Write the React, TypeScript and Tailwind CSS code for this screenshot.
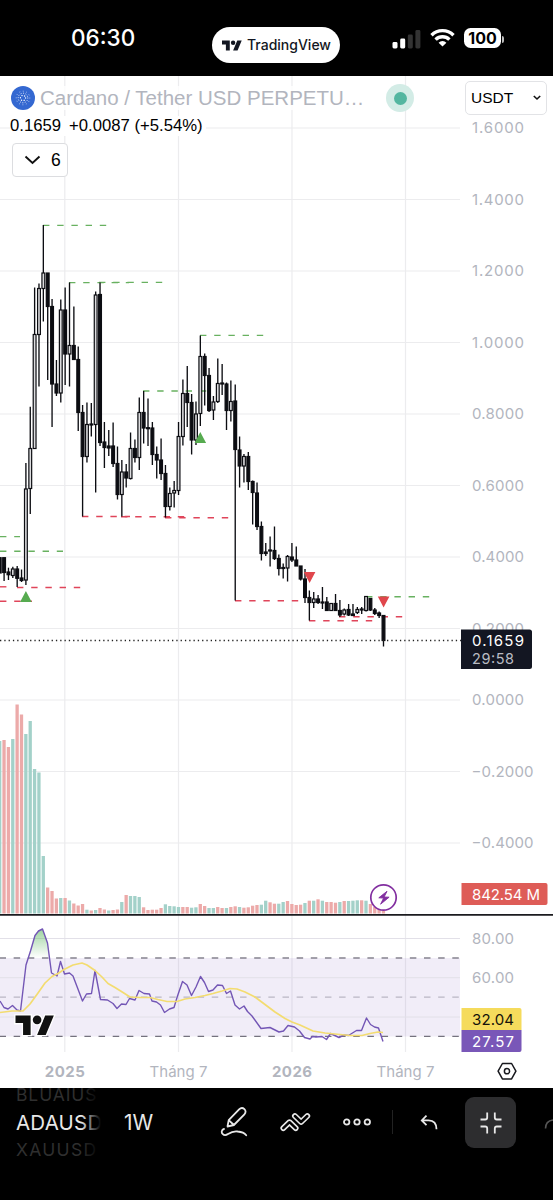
import React from 'react';

const STEP = 4.361;
const FIRST = -6;
const xAt = (i: number) => 25.9 + STEP * i;

// body top, body bottom, high, low, direction (1 = up, 0 = down)
type Candle = [number, number, number, number, 0 | 1];

const CANDLES: Candle[] = [
  [557.7, 573, 557.7, 573, 0], [557.7, 572.5, 557.7, 581, 0], [572, 574.7, 567.7, 580, 0],
  [569, 575.5, 566.7, 578, 1], [569, 578.3, 566, 587, 0], [578, 580.5, 569.5, 582, 0],
  [489, 580, 463, 585, 1], [448.5, 488.5, 406.7, 514, 1], [334.5, 448.5, 287.5, 449, 1],
  [288.5, 334.5, 283.5, 386.5, 1], [273, 288.5, 225, 321.5, 1], [273, 306.5, 273, 380, 0],
  [306.5, 384, 299, 427, 0], [384, 393, 360, 396, 0], [310, 393, 299.5, 402.5, 1],
  [310, 354, 287.5, 385, 0], [345.5, 354, 282.5, 386.5, 1], [345.5, 359.5, 306.5, 360, 0],
  [359.5, 412.5, 346.5, 431, 0], [412.5, 456.5, 405, 516.5, 0], [424.5, 456.5, 402.5, 462.5, 1],
  [424, 425, 403, 436.5, 1], [295, 424.5, 291.5, 492.5, 1], [294.5, 442.5, 282.5, 446, 0],
  [442, 447.5, 422, 468, 0], [446, 448, 430, 456, 0], [446, 463.5, 422.5, 467, 0],
  [463.5, 494.5, 446.5, 499.5, 0], [472, 494.5, 460, 516.5, 1], [472, 478, 464, 487.5, 0],
  [448.5, 478.5, 432.5, 479.5, 1], [448.5, 457.5, 439.5, 462.5, 0], [412.5, 457.5, 397.5, 470, 1],
  [412.5, 428, 391, 443.5, 0], [427.7, 428.7, 398.5, 446, 0], [428, 454.5, 422, 465, 0],
  [454.5, 460, 446.5, 478.5, 0], [460, 473.5, 438.5, 480, 0], [473.5, 506.5, 465, 517.5, 0],
  [493.5, 506.5, 487.5, 510.5, 1], [490.5, 493, 481, 507.5, 1], [436.5, 490.5, 422, 495, 1],
  [393.5, 436.5, 379.5, 445.5, 1], [393.5, 402.5, 366, 427, 0], [402.5, 440, 394, 454.5, 0],
  [414, 440, 401.5, 445, 1], [356.5, 413.5, 335.5, 426, 1], [356.5, 375.5, 353.5, 405.5, 0],
  [375.5, 410.5, 368, 412, 0], [402, 410, 396, 420, 1], [383.5, 401.5, 358.5, 403, 1],
  [383, 384, 364, 395, 0], [384, 410.5, 382.5, 430, 0], [401.5, 410.5, 380.5, 421.5, 1],
  [401, 449.5, 384.5, 600.5, 0], [450, 466, 436.5, 487.5, 0], [456.5, 466, 454, 482.5, 1],
  [456.5, 481.5, 452, 490, 0], [481.5, 492.5, 480.5, 524.5, 0], [493, 526.5, 482.5, 530, 0],
  [526.5, 553.5, 521.5, 560.5, 0], [552, 553.5, 543, 556, 0], [550, 551, 536.5, 566.5, 0],
  [550.5, 558.5, 526.5, 560, 0], [558.5, 568.5, 554.5, 575.5, 0], [567.5, 568.5, 563.5, 578.5, 0],
  [556.5, 568, 555, 581.5, 1], [557, 560, 543, 562, 0], [560, 566, 546.5, 566, 0],
  [566, 579, 566, 580.5, 0], [579, 597.5, 569, 603, 0], [597.5, 602.5, 590.5, 620.5, 0],
  [599, 602.5, 592, 608, 1], [599, 602.5, 595, 604, 0], [602, 603, 587, 609, 0],
  [602, 610.5, 597, 611, 0], [603.5, 610.5, 603, 611, 1], [603.5, 610.5, 594, 611, 0],
  [610.5, 615, 600, 617, 0], [610, 614, 608.5, 615.5, 1], [609.5, 615, 604, 616, 0],
  [614, 615.5, 604, 616, 0], [609.5, 612.5, 607, 614, 1], [609, 610, 607, 614, 0],
  [596.5, 610.5, 596, 611.5, 1], [598.5, 610, 598, 611, 0], [610, 613.5, 608, 615, 0],
  [613, 615.5, 611.5, 618, 0], [615.5, 640.5, 615, 646.5, 0],
];

// top edge of each volume bar, paired with the colour string below
const VOLUME_TOPS = [
  741, 740, 747, 739, 704.5, 714.5, 734, 721, 769, 772.5, 856, 887.5, 891, 898.5, 898, 898, 900.5,
  903.5, 905.5, 904, 909.7, 910.5, 910, 908, 909.5, 910.5, 910, 909.5, 902, 895, 896, 896, 897, 907.3,
  910, 909.7, 909.7, 908, 904.3, 906, 906.3, 907, 907, 907, 907.7, 907.3, 904, 906, 908, 908, 907,
  908, 908, 907, 906.3, 907, 907.7, 907.3, 905.7, 905, 904.7, 900.7, 902.3, 903.7, 903.7, 902, 901,
  904, 905, 904.7, 903, 900.7, 900.7, 899.3, 900.7, 902, 902, 902.7, 902, 901, 901, 900.7, 900.3,
  900.3, 900.7, 904, 907, 909, 911,
];
const VOLUME_COLORS =
  'grrgrrggggg' + 'rrrgrgrrrgrgrrgrr' + 'grggg' + 'rrrrrggggrrggrrggrrgrrgrrrrggrrggrrrrgrgrgrrrgrgggrgrrrr';

const RSI =
  '0,1001 4,1007.5 8,1009 12.5,1005.5 17,1010 20.5,1011 23,990 26,965 30.5,951 35,935.5 38.5,931 42.5,929 47.5,943 51.5,973 57,976 60.5,961.5 64.5,974 69.5,973 73,976 82.5,1001 86.5,994 91.5,993.5 95,970.5 100.5,999.5 107.5,1000 113,1003.5 117,1008.5 121.5,1004 126,1004.5 129.5,998.5 135,1000 139,990.5 144,993.5 149.5,994 152,1001 156.5,1002 160.5,1005 164.5,1012.5 169.5,1009 174,1007.5 177.5,996 182.5,981.5 187,985 191.5,995.5 196,987 200.5,976.5 204.5,982.5 208.5,991.5 213,990 217.5,985 222.5,985.5 226.5,993.5 230.5,991 235,1005 239.5,1009 244,1006 247.5,1011.5 252,1016 261,1028.5 270,1027.5 279,1032 283.5,1031 288,1025.5 294.5,1027 299.5,1031 304.5,1037.5 310,1039 312.5,1036.5 316,1037 322,1036.5 326.5,1039.5 330.5,1033.5 339,1037.5 344,1035 348.5,1035.5 356.5,1030.5 361.5,1030.5 366.5,1018 370.5,1024.5 374.5,1027 378.5,1028 383,1041.5';

const RSI_MA =
  '0,1012.5 12,1011 23,1011 30,1004 38,993 45,983 52,976.5 58,973.5 64,969.5 73,965 82,963 87,965 95,970.5 102,977 108,983.5 115,987.5 123,992.5 130,997 140,997.5 150,997.5 158,999.5 167,1001.5 177,1001.5 185,999 195,997.5 205,995.5 213,993.5 222,991 230,988.5 237,989 245,992 255,997 265,1004.5 275,1012 285,1018.5 292,1022 300,1025 313,1031 325,1033 340,1034.5 350,1035.5 362,1035.5 370,1033.5 378,1032 383,1032.5';

const PRICES: [string, number][] = [
  ['1.6000', 128], ['1.4000', 199.5], ['1.2000', 271], ['1.0000', 342.5], ['0.8000', 414],
  ['0.6000', 485.5], ['0.4000', 557], ['0.2000', 628.5], ['0.0000', 700], ['−0.2000', 771.5],
  ['−0.4000', 843],
];

const DATES: [string, number, boolean][] = [
  ['2025', 64.8, true], ['Tháng 7', 178.5, false], ['2026', 292, true], ['Tháng 7', 405.5, false],
];

// x1, x2, y
const GREEN_LEVELS = [
  [43, 107, 225.4], [69, 129, 282.6], [99, 164, 282.4], [143, 208, 391], [200, 264, 335.4],
  [0, 20, 536.6], [0, 63, 551.3], [366, 430, 596.7],
];
const RED_LEVELS = [
  [82, 130, 516.5], [121, 186, 516.8], [165, 230, 517.7], [0, 11, 586.8], [17, 82, 587.5],
  [0, 32, 601.3], [235, 299, 600.8], [309, 374, 620.7], [339, 404, 616.8],
];

const TvLogo = ({ className }: { className?: string }) => (
  <svg viewBox="0 4 36 18" className={className} fill="currentColor">
    <path d="M14 22H7V11H0V4h14v18zM28 22h-8l7.5-18h8L28 22z" />
    <circle cx="20" cy="8" r="4" />
  </svg>
);

const StatusBar = () => (
  <header className="flex h-[76px] shrink-0 items-start bg-black text-white">
    <div className="ml-[71px] mt-[23px] w-[141px] text-[22.5px] font-medium leading-[30px]">06:30</div>
    <div className="mt-[27px] flex h-9 w-[128px] items-center gap-[5px] rounded-full bg-white pl-[10px] text-[#131722]">
      <TvLogo className="h-[11px] w-[20px]" />
      <span className="whitespace-nowrap text-[14px] font-medium leading-5">TradingView</span>
    </div>
    <div className="ml-[52px] mt-[28px] flex h-[22px] items-center">
      <svg viewBox="0 0 29 20" className="mr-[9px] h-5 w-[29px]">
        <rect x="0.5" y="13" width="5" height="6.5" rx="1.4" fill="#fff" />
        <rect x="8.2" y="9.5" width="5" height="10" rx="1.4" fill="#fff" />
        <rect x="15.8" y="5.5" width="5" height="14" rx="1.4" fill="#333" />
        <rect x="23.4" y="1" width="5" height="18.5" rx="1.4" fill="#333" />
      </svg>
      <svg viewBox="0 0 25 19" className="-mt-1 mr-[9px] h-[19px] w-[25px]" fill="none" stroke="#fff" strokeWidth="3.4">
        <path d="M1.5 7.2a15.6 15.6 0 0 1 22 0" />
        <path d="M5.6 11.6a9.8 9.8 0 0 1 13.8 0" />
        <path d="M12.5 18.6l-3.9-3.9a5.5 5.5 0 0 1 7.8 0z" fill="#fff" stroke="none" />
      </svg>
      <div className="-mt-0.5 flex h-[20px] w-[37px] items-center justify-center rounded-[6.5px] bg-white text-[16px] font-bold leading-none text-black">
        100
      </div>
      <div className="ml-[1px] h-[7px] w-[2px] rounded-r-full bg-[#bbb]" />
    </div>
  </header>
);

const Chart = () => (
  <svg viewBox="0 76 553 1012" className="block h-[1012px] w-[553px]">
    <defs>
      <linearGradient id="overbought" x1="0" y1="0" x2="0" y2="1">
        <stop offset="0" stopColor="#4caf50" stopOpacity="0.55" />
        <stop offset="1" stopColor="#4caf50" stopOpacity="0" />
      </linearGradient>
    </defs>

    {/* Grid */}
    <g stroke="#ececee" strokeWidth="1.2">
      {PRICES.map(([label, y]) => (
        <line key={label} x1="0" x2="460" y1={y} y2={y} />
      ))}
      {DATES.map(([, x]) => (
        <line key={x} x1={x} x2={x} y1="76" y2="1052" />
      ))}
    </g>

    {/* Volume */}
    {VOLUME_TOPS.map((top, n) => (
      <rect
        key={n}
        x={xAt(n + FIRST) - 1.7}
        y={top}
        width="3.3"
        height={913.5 - top}
        fill={VOLUME_COLORS[n] === 'g' ? '#a3d1c9' : '#ecaaa9'}
      />
    ))}

    {/* Levels */}
    <g stroke="#68b160" strokeWidth="1.4" strokeDasharray="6.4 7.8">
      {GREEN_LEVELS.map(([x1, x2, y]) => (
        <line key={`${x1}-${y}`} x1={x1} x2={x2} y1={y} y2={y} />
      ))}
    </g>
    <g stroke="#e0455a" strokeWidth="1.4" strokeDasharray="6.4 7.8">
      {RED_LEVELS.map(([x1, x2, y]) => (
        <line key={`${x1}-${y}`} x1={x1} x2={x2} y1={y} y2={y} />
      ))}
    </g>

    {/* Candles */}
    {CANDLES.map(([top, bottom, high, low, up], n) => {
      const x = xAt(n + FIRST);
      return (
        <g key={n} stroke="#0c0d12">
          <line x1={x} x2={x} y1={high} y2={low} strokeWidth="1.35" />
          <rect
            x={x - 1.4}
            y={top}
            width="2.8"
            height={bottom - top}
            strokeWidth="1.2"
            fill={up ? '#dcdcde' : '#0c0d12'}
          />
        </g>
      );
    })}

    {/* Signals */}
    <path d="M25.9 591l5.8 11H20.1zM200.3 432l5.8 11h-11.6z" fill="#56ab50" />
    <path d="M309.6 583l-5.8-11h11.6zM383.6 607.5l-5.8-11h11.6z" fill="#e0464c" />

    {/* Last price */}
    <line x1="0" x2="461" y1="640.5" y2="640.5" stroke="#222" strokeWidth="1.3" strokeDasharray="1.3 3" />

    {/* Event marker */}
    <circle cx="383.5" cy="897.5" r="12.7" fill="#fff" stroke="#822fa0" strokeWidth="1.7" />
    <path d="M387 891.3l-8.2 6.5 4.8.3-3 6.1 8.5-7-5-.2z" fill="#822fa0" stroke="#822fa0" strokeWidth="0.9" strokeLinejoin="round" />

    {/* RSI pane */}
    <rect x="0" y="958" width="460" height="78.5" fill="#7e57c2" fillOpacity="0.11" />
    <g stroke="#e2e0e8" strokeWidth="1">
      <line x1="0" x2="460" y1="938.5" y2="938.5" />
      <line x1="0" x2="460" y1="977.7" y2="977.7" />
      <line x1="0" x2="460" y1="1017" y2="1017" />
    </g>
    <g strokeWidth="1.3" strokeDasharray="6.5 7.65" strokeDashoffset="0.5">
      <line x1="0" x2="459" y1="958" y2="958" stroke="#85838e" />
      <line x1="0" x2="459" y1="997.2" y2="997.2" stroke="#bab7c3" />
      <line x1="0" x2="459" y1="1036.3" y2="1036.3" stroke="#74727e" />
    </g>
    <path d="M28.5 958L30.5 951 35 935.5 38.5 931 42.5 929 47.5 943 49.5 958z" fill="url(#overbought)" />
    <polyline points={RSI} fill="none" stroke="#7356b5" strokeWidth="1.4" strokeLinejoin="round" />
    <polyline points={RSI_MA} fill="none" stroke="#f3dc70" strokeWidth="1.7" strokeLinejoin="round" />
    <line x1="0" x2="553" y1="914.8" y2="914.8" stroke="#1b1b1f" strokeWidth="1.7" />

    {/* Price axis */}
    <g fontSize="15" fill="#b2b5be">
      {PRICES.map(([label, y]) => (
        <text key={label} x={label.length > 6 ? 471.5 : 472} y={y + 5} textLength={label.length > 6 ? 62 : 52}>
          {label}
        </text>
      ))}
      <text x="472" y="943.7" textLength="42">80.00</text>
      <text x="472" y="983" textLength="42">60.00</text>
    </g>
    <path d="M461 629.5h68.5q2.5 0 2.5 2.5v34.5q0 2.5-2.5 2.500H461z" fill="#131622" />
    <text x="472" y="646.2" fontSize="15" textLength="52" fill="#fff">0.1659</text>
    <text x="472" y="664" fontSize="14.5" textLength="42" fill="#b9bbc3">29:58</text>
    <path d="M461.5 883h84q2 0 2 2v18q0 2-2 2h-84z" fill="#de5c57" />
    <text x="472" y="899.5" fontSize="15" textLength="68" fill="#fff">842.54 M</text>
    <path d="M461.5 1008h58q2 0 2 2v20h-60z" fill="#f5db5c" />
    <path d="M461.5 1030h60v20q0 2-2 2h-58z" fill="#7957b8" />
    <text x="472" y="1025" fontSize="15" textLength="42" fill="#16130a">32.04</text>
    <text x="472" y="1047" fontSize="15" textLength="42" fill="#fff">27.57</text>

    {/* Time axis */}
    {DATES.map(([label, x, bold]) => (
      <text
        key={x}
        x={x}
        y="1077"
        fontSize="15"
        fontWeight={bold ? 700 : 400}
        textAnchor="middle"
        textLength={bold ? 40 : 58}
        fill="#b2b5be"
      >
        {label}
      </text>
    ))}
    <g fill="none" stroke="#17181d" strokeWidth="1.5" strokeLinejoin="round">
      <path d="M502.4 1063.5h9.2l4.3 7.7-4.3 7.7h-9.2l-4.3-7.7z" />
      <circle cx="507" cy="1071.2" r="2.6" />
    </g>

    {/* Watermark */}
    <g
      transform="translate(15.5 1011.2) scale(1.08)"
      fill="#111"
      stroke="#fff"
      strokeWidth="2.5"
      paintOrder="stroke"
    >
      <path d="M14 22H7V11H0V4h14v18zM28 22h-8l7.5-18h8L28 22z" />
      <circle cx="20" cy="8" r="4" />
    </g>
  </svg>
);

const CardanoIcon = () => (
  <svg viewBox="0 0 24 24" className="h-6 w-6">
    <circle cx="12" cy="12" r="12" fill="#3468d1" />
    <g fill="none" stroke="#fff" strokeLinecap="round">
      <circle cx="12" cy="12" r="2.6" strokeWidth="1.3" strokeDasharray="0.1 2.62" />
      <circle cx="12" cy="12" r="4.8" strokeWidth="1" strokeDasharray="0.1 2.4" />
      <circle cx="12" cy="12" r="6.8" strokeWidth="0.9" strokeDasharray="0.1 3.46" opacity="0.7" />
    </g>
  </svg>
);

const Legend = () => (
  <div className="absolute inset-x-0 top-0 pl-[10px] pt-[8px] font-['Liberation_Sans',Arial,sans-serif] text-black">
    <div className="flex h-7 items-center">
      <div className="ml-px"><CardanoIcon /></div>
      <span className="ml-[5px] w-[326px] whitespace-nowrap bg-white/80 text-[20.5px] leading-6 text-[#b2b5be]">
        Cardano / Tether USD PERPETU…
      </span>
      <span className="ml-[20px] flex h-7 w-7 items-center justify-center rounded-full bg-[#d3ece6]">
        <span className="h-[13px] w-[13px] rounded-full bg-[#53b6a0]" />
      </span>
    </div>
    <div className="mt-[4px] flex w-[196px] gap-[8px] whitespace-nowrap bg-white text-[16.7px] leading-5">
      <span>0.1659</span>
      <span>+0.0087 (+5.54%)</span>
    </div>
    <button className="ml-[2px] mt-[7px] flex h-[34px] w-[56px] items-center gap-[10px] rounded-[4px] border border-[#dcdde0] bg-white pl-[11px] text-[17.5px]">
      <svg viewBox="0 0 17 10" className="h-[10px] w-[17px]" fill="none" stroke="#111" strokeWidth="1.9">
        <path d="M1.5 1.5l7 6.5 7-6.5" />
      </svg>
      6
    </button>
    <button className="absolute left-[465px] top-[5px] flex h-[34px] w-[82px] items-center justify-between rounded-[5px] border border-[#e2e3e6] bg-white pl-[5px] pr-[5px] text-[15.5px]">
      USDT
      <svg viewBox="0 0 8 6" className="h-[6px] w-[8px]" fill="none" stroke="#111" strokeWidth="1.6">
        <path d="M0.8 1l3.200 3 3.200-3" />
      </svg>
    </button>
  </div>
);

const Toolbar = () => (
  <footer className="flex h-[112px] shrink-0 items-start overflow-hidden bg-black text-[#e8e8e8]">
    {/* Symbol wheel */}
    <div className="relative ml-4 h-[80px] w-[85px] overflow-hidden whitespace-nowrap">
      <div className="-mt-[6px] h-[25px] text-[17.5px] leading-[25px] tracking-[0.9px] text-[#2f2f2f]">BLUAIUS</div>
      <div className="h-[32px] text-[20.5px] leading-[32px] tracking-[0.2px]">ADAUSD</div>
      <div className="h-[22px] text-[17.5px] leading-[22px] tracking-[1.3px] text-[#2f2f2f]">XAUUSD</div>
      <div className="absolute inset-y-0 right-0 w-[20px] bg-gradient-to-r from-transparent to-black" />
    </div>
    <div className="ml-[23px] mt-[19px] w-[32px] text-[21px] leading-8">1W</div>
    <svg viewBox="220 1105 28 32" className="ml-[64px] mt-[17px] h-8 w-7" fill="none" stroke="currentColor" strokeWidth="1.8" strokeLinecap="round" strokeLinejoin="round">
      <path d="M227.5 1126.5l1.2-6.4 10.400-10.7c2-2 4-1.5 5.3-.3 1.4 1.3 1.7 3.4 0 5.2l-10.5 10.7-6.4 1.5zM228.7 1120.1l5.2 4.9" />
      <path d="M224 1129c-2.500.6-2.800 3.500-1.400 4.900 1.500 1.600 3.700 1.300 5.400.2 3-2 6-3.100 9.700-2.600 4 .4 6.800 1.600 8.500 3.700" />
    </svg>
    {/* Pattern tool: two outlined chevrons */}
    <svg viewBox="278 1105 34 32" className="ml-[30px] mt-[17px] h-8 w-[34px]" fill="none" strokeLinecap="round" strokeLinejoin="round">
      <path d="M283.3 1128.2l6.200-6 6.200 6M294.900 1116l6.200 6 6.200-6" stroke="currentColor" strokeWidth="5.800" />
      <path d="M283.300 1128.200l6.200-6 6.200 6M294.900 1116l6.200 6 6.200-6" stroke="#000" strokeWidth="2.500" />
    </svg>
    <svg viewBox="0 0 28 8" className="ml-[31px] mt-[30px] h-2 w-7" fill="none" stroke="currentColor" strokeWidth="1.8">
      <circle cx="3.7" cy="4" r="2.7" />
      <circle cx="14" cy="4" r="2.7" />
      <circle cx="24.3" cy="4" r="2.7" />
    </svg>
    <div className="ml-[21px] mt-[22px] h-6 w-px bg-[#222]" />
    <svg viewBox="419 1113 20 18" className="ml-[26px] mt-[25px] h-[18px] w-5" fill="none" stroke="currentColor" strokeWidth="1.8">
      <path d="M426.5 1115.7l-4.700 4.700 4.700 4.700M422 1120.400h6.500q8 .3 8 8.800" />
    </svg>
    <button className="ml-[26px] mt-[9px] flex h-[51px] w-[51px] items-center justify-center rounded-[9px] bg-[#2d2d2f]">
      <svg viewBox="0 0 22 22" className="h-[22px] w-[22px]" fill="none" stroke="currentColor" strokeWidth="1.8">
        <path d="M0.5 7.5h4.700q2 0 2-2V0.500M14.800 0.500v5q0 2 2 2h4.700M0.500 14.500h4.700q2 0 2 2v5M14.800 21.500v-5q0-2 2-2h4.700" />
      </svg>
    </button>
    <svg viewBox="0 0 9 12" className="ml-[28px] mt-[30px] h-3 w-[9px] shrink-0" fill="none" stroke="#565656" strokeWidth="1.6">
      <path d="M1.500 10.500Q1.500 3 9 2" />
    </svg>
  </footer>
);

const App = () => {
  return (
    <div className="flex h-[1200px] w-[553px] flex-col overflow-hidden bg-black font-[Inter,sans-serif]">
      <StatusBar />
      <main className="relative h-[1012px] shrink-0 bg-white">
        <Chart />
        <Legend />
      </main>
      <Toolbar />
    </div>
  );
};

export default App;
